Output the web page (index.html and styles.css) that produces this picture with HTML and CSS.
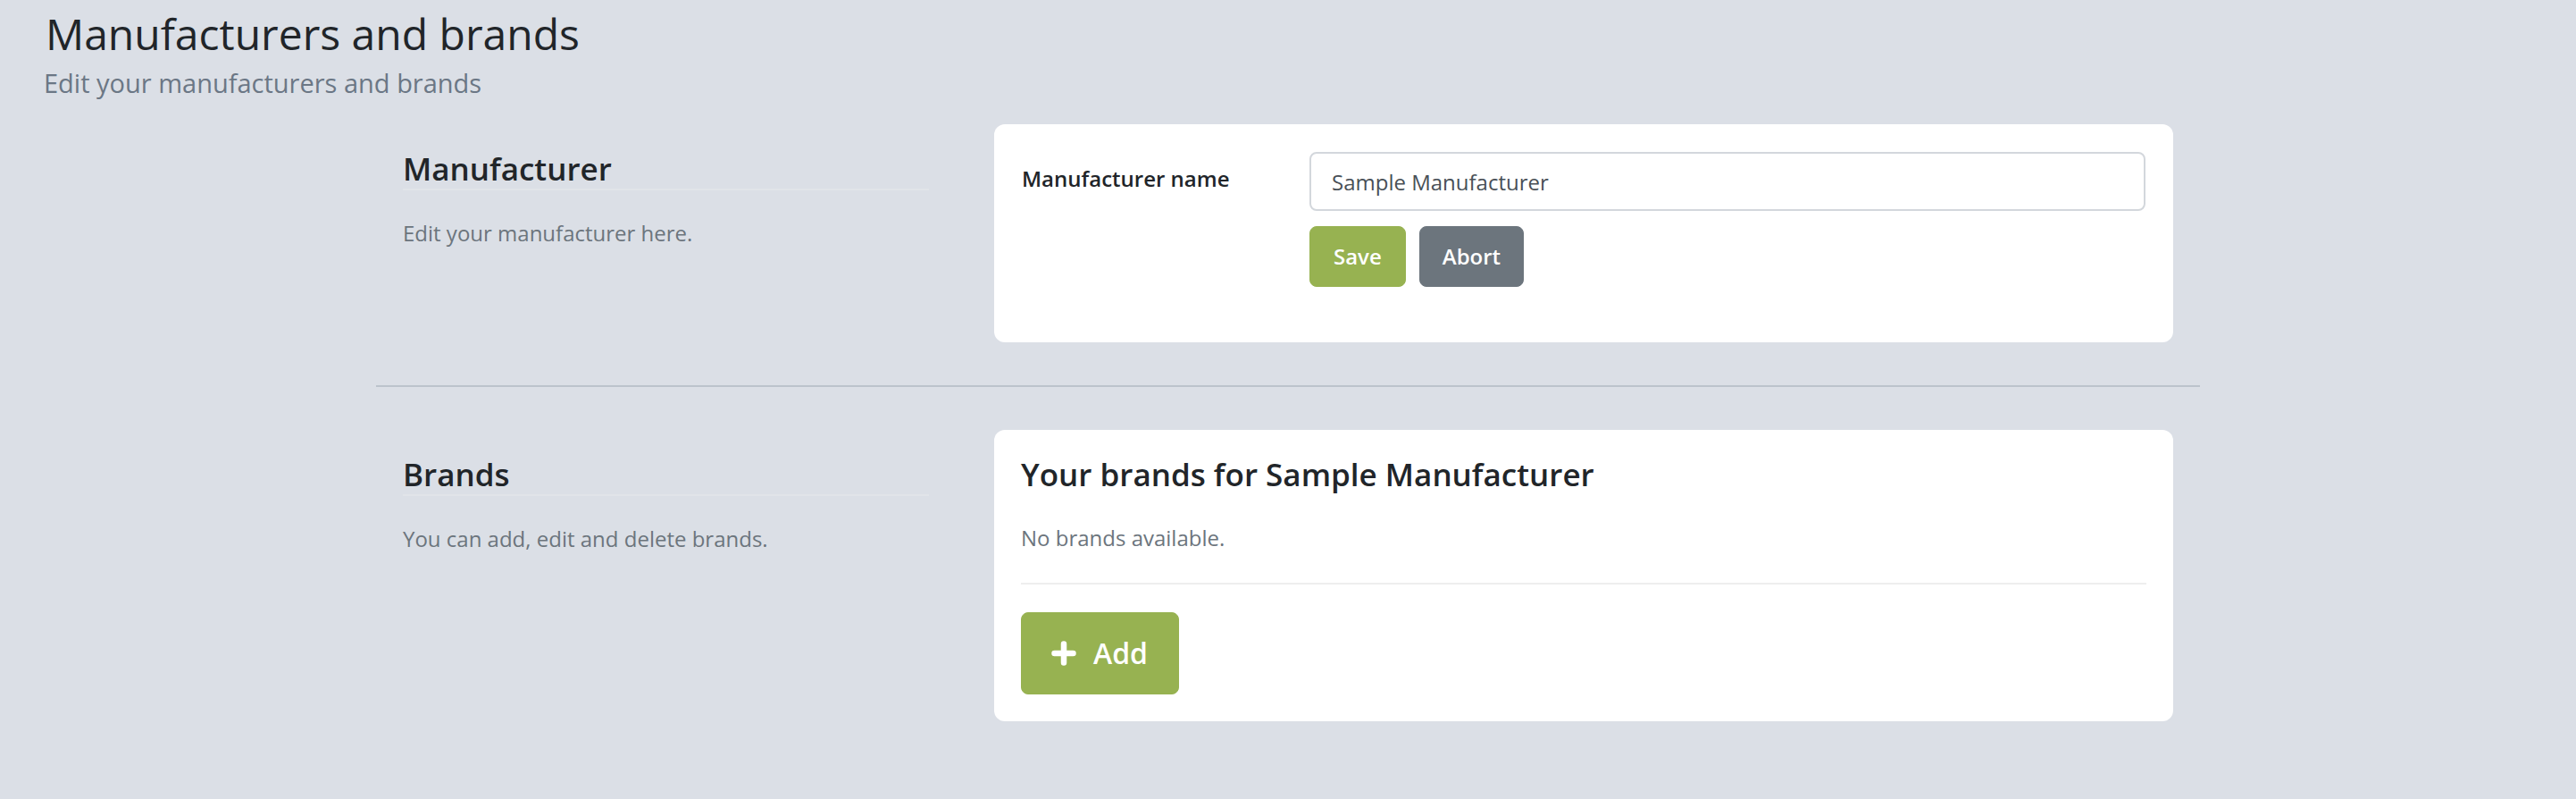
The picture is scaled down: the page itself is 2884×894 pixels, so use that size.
FILE: index.html
```html
<!DOCTYPE html>
<html lang="en">
<head>
<meta charset="utf-8">
<title>Manufacturers and brands</title>
<link rel="stylesheet" href="styles.css">
</head>
<body>
<header class="page-header">
  <h1 class="page-title">Manufacturers and brands</h1>
  <p class="page-subtitle">Edit your manufacturers and brands</p>
</header>
<main class="container">
  <section class="section">
    <div class="section-info">
      <h2 class="section-title">Manufacturer</h2>
      <p class="section-desc">Edit your manufacturer here.</p>
    </div>
    <div class="card card-form">
      <div class="form-row">
        <label class="form-label" for="mname">Manufacturer name</label>
        <div class="form-field">
          <input class="form-input" id="mname" type="text" value="Sample Manufacturer">
          <div class="btn-row">
            <button class="btn btn-green" type="button">Save</button>
            <button class="btn btn-gray" type="button">Abort</button>
          </div>
        </div>
      </div>
    </div>
  </section>
  <hr class="divider">
  <section class="section">
    <div class="section-info">
      <h2 class="section-title">Brands</h2>
      <p class="section-desc">You can add, edit and delete brands.</p>
    </div>
    <div class="card card-list">
      <h3 class="card-title">Your brands for Sample Manufacturer</h3>
      <p class="card-text">No brands available.</p>
      <hr class="card-rule">
      <button class="btn btn-green btn-lg" type="button">
        <svg class="plus" viewBox="0 0 28 28" width="28" height="28" aria-hidden="true"><path d="M14 3.5V24.5M3.5 14H24.5" stroke="#fff" stroke-width="6.5" stroke-linecap="round" fill="none"/></svg>
        <span>Add</span>
      </button>
    </div>
  </section>
</main>
</body>
</html>
```
FILE: styles.css
```css
* { box-sizing: border-box; }
html, body { margin: 0; padding: 0; }
body {
  background: #dbdfe6;
  font-family: "Open Sans", "Noto Sans", "Liberation Sans", sans-serif;
  color: #212529;
  width: 2884px;
  min-height: 894px;
}
.page-header { padding: 9px 46px 0 49px; }
.page-title {
  margin: 0 0 0 2px;
  font-size: 48px;
  font-weight: 400;
  line-height: 57.6px;
  color: #212529;
}
.page-subtitle {
  margin: 4px 0 0;
  font-size: 29px;
  line-height: 43.5px;
  color: #6b7785;
}
.container {
  width: 2042px;
  margin: 25px auto 0;
}
.section {
  display: grid;
  grid-template-columns: 589px 1fr;
  column-gap: 73px;
  padding: 0 30px 0 30px;
  align-items: start;
}
.section-info { padding-top: 29px; }
.section-title {
  margin: 0;
  font-size: 35px;
  font-weight: 600;
  line-height: 42px;
  padding-bottom: 1px;
  border-bottom: 2px solid #e1e4e9;
}
.section-desc {
  margin: 30px 0 0;
  font-size: 24px;
  line-height: 36px;
  color: #6c757d;
}
.divider {
  border: 0;
  border-top: 2px solid #bcc3cc;
  margin: 48px 0;
  height: 0;
}
.card {
  background: #fff;
  border-radius: 12px;
}
.card-form { padding: 31px 31px 62px 31px; }
.form-row {
  display: grid;
  grid-template-columns: 322px 1fr;
}
.form-label {
  font-size: 24px;
  font-weight: 600;
  line-height: 36px;
  padding-top: 12px;
  color: #212529;
}
.form-input {
  display: block;
  width: 100%;
  height: 66px;
  border: 2px solid #d3d7dc;
  border-radius: 8px;
  padding: 0 23px;
  font-family: inherit;
  font-size: 24px;
  color: #495057;
  background: #fff;
  outline: none;
}
.btn-row {
  display: flex;
  gap: 15px;
  margin-top: 17px;
}
.btn {
  font-family: inherit;
  font-size: 24px;
  font-weight: 600;
  line-height: 36px;
  padding: 15px 26px;
  border: 1px solid transparent;
  border-radius: 8px;
  color: #fff;
  cursor: pointer;
}
.btn-gray { padding-left: 25px; padding-right: 25px; }
.btn-green { background: #97b251; border-color: #97b251; }
.btn-gray { background: #6c757d; border-color: #6c757d; }
.btn-lg {
  display: inline-flex;
  align-items: center;
  gap: 19px;
  font-size: 32px;
  line-height: 48px;
  padding: 21px 34px 21px 33px;
}
.plus { display: block; }
.card-list { padding: 31px 30px 30px 30px; }
.card-title {
  margin: 0;
  font-size: 35px;
  font-weight: 600;
  line-height: 38.5px;
  color: #212529;
}
.card-text {
  margin: 33.5px 0 0;
  font-size: 24px;
  line-height: 36px;
  color: #6c757d;
}
.card-rule {
  border: 0;
  border-top: 2px solid #eeeeee;
  margin: 32px 0 31px;
  height: 0;
}
```
